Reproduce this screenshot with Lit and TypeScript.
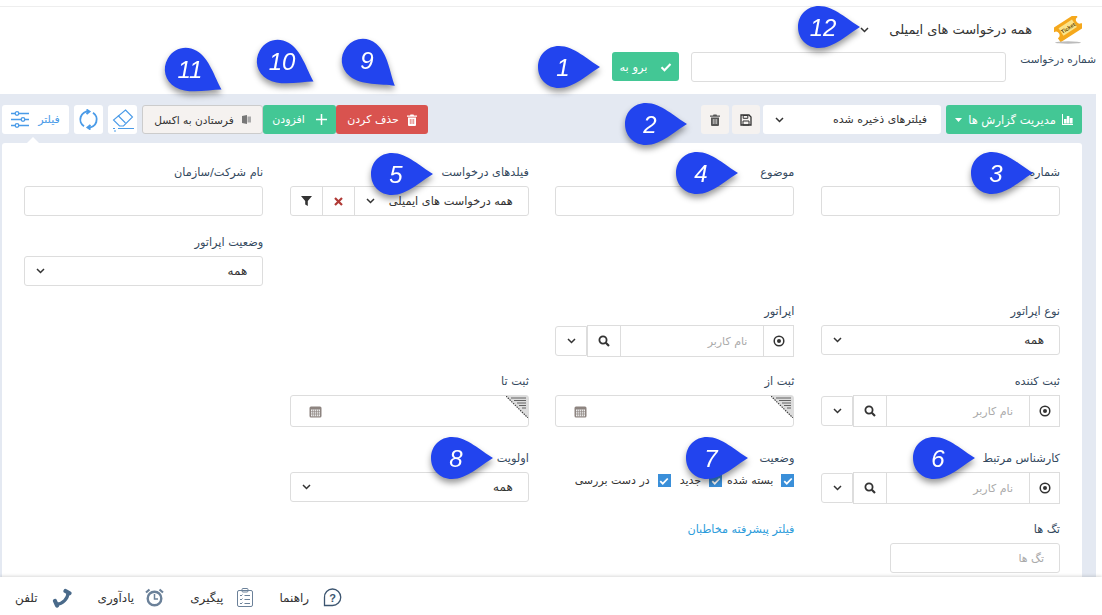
import { LitElement, html, css, svg } from "lit";
import { customElement } from "lit/decorators.js";

const chevron = html`<svg class="chev" width="9" height="6" viewBox="0 0 9 6"><path d="M1 1l3.5 3.5L8 1" fill="none" stroke="#333" stroke-width="1.5"/></svg>`;
const searchIcon = html`<svg width="12" height="12" viewBox="0 0 12 12"><circle cx="5" cy="5" r="3.6" fill="none" stroke="#333" stroke-width="1.8"/><path d="M7.8 7.8L11 11" stroke="#333" stroke-width="2.2"/></svg>`;
const dotIcon = html`<svg width="12" height="12" viewBox="0 0 12 12"><circle cx="6" cy="6" r="4.8" fill="none" stroke="#333" stroke-width="1.5"/><circle cx="6" cy="6" r="2" fill="#333"/></svg>`;
const calIcon = html`<svg width="13" height="13" viewBox="0 0 13 13"><rect x="0.5" y="1.5" width="12" height="11" rx="1.5" fill="#8d8480"/><rect x="2" y="4.5" width="9" height="6.8" fill="#eee"/><path d="M3.7 4.5v7M5.6 4.5v7M7.5 4.5v7M9.4 4.5v7M2 6.7h9M2 9h9" stroke="#8d8480" stroke-width=".7"/></svg>`;
const checkIcon = (c: string, s = 12) => html`<svg width="${s}" height="${s}" viewBox="0 0 12 12"><path d="M1.5 6.2l3 3L10.5 3" fill="none" stroke="${c}" stroke-width="2.1"/></svg>`;
const trashIcon = (c: string) => html`<svg width="10" height="12" viewBox="0 0 10 12"><path d="M3.5 .5h3l.5 1h3v1.3H0V1.500h3zM1 3.500h8V11a1 1 0 0 1-1 1H2a1 1 0 0 1-1-1z" fill="${c}"/><path d="M3.300 5v5M5 5v5M6.700 5v5" stroke="${c === "#fff" ? "#d9534f" : "#f5f2f0"}" stroke-width=".7"/></svg>`;

const markers = [
  { n: "1", x: 559, y: 67, a: 0 },
  { n: "2", x: 646, y: 124, a: 0 },
  { n: "3", x: 992, y: 173, a: 0 },
  { n: "4", x: 697, y: 173, a: 0 },
  { n: "5", x: 392, y: 174, a: 0 },
  { n: "6", x: 934, y: 458, a: 0 },
  { n: "7", x: 707, y: 458, a: 0 },
  { n: "8", x: 452, y: 458, a: 0 },
  { n: "9", x: 363, y: 60, a: 39 },
  { n: "10", x: 278, y: 61, a: 30 },
  { n: "11", x: 186, y: 69, a: 30 },
  { n: "12", x: 819, y: 27, a: 0 },
];

@customElement("app-root")
export class AppRoot extends LitElement {
  static styles = css`
    :host { display: flex; flex-direction: column; position: relative; width: 1102px; height: 615px; overflow: hidden; background: #fff; direction: rtl; font-family: "DejaVu Sans", "Noto Sans", sans-serif; font-size: 11px; color: #333; }
    * { box-sizing: border-box; }
    .topline { height: 7px; border-bottom: 1px solid #eee; flex: none; }
    .head { display: flex; align-items: center; height: 45px; padding-right: 20px; flex: none; }
    .ticket { width: 28px; height: 28px; margin-left: 22px; }
    .title { font-size: 13px; color: #333; margin-left: 20px; }
    .goto { display: flex; height: 30px; padding-right: 6px; flex: none; }
    .goto label { width: 75px; font-size: 10.500px; color: #34495e; white-space: nowrap; margin-left: 15px; padding-top: 1px; }
    .goto input { width: 315px; margin-left: 12px; }
    input { height: 30px; border: 1px solid #ddd; border-radius: 3px; background: #fff; font: inherit; direction: rtl; padding: 0 15px; outline: none; display: block; }
    input::placeholder { color: #aaa; }
    .btn { display: flex; align-items: center; justify-content: center; gap: 8px; height: 29px; border-radius: 3px; font-size: 11px; white-space: nowrap; }
    .green { background: #43c795; color: #fff; }
    .red { background: #d9534f; color: #fff; }
    .beige { background: #f5f2f0; border: 1px solid #ccc; color: #333; font-size: 10.600px; }
    .go { width: 67px; gap: 12px; font-size: 11.500px; }
    .band { flex: 1; min-height: 0; margin: 12px 6px 0 0; background: #e4e9f2; padding: 11px 14px 0 2px; display: flex; flex-direction: column; }
    .bar { display: flex; justify-content: space-between; height: 29px; flex: none; margin-bottom: 9px; }
    .side { display: flex; align-items: stretch; }
    .reports { width: 136px; font-size: 11.500px; gap: 6px; }
    .saved { width: 178px; margin-right: 5px; background: #fff; border-radius: 3px; display: flex; align-items: center; justify-content: space-between; padding: 0 14px 0 12px; font-size: 11px; }
    .sq { width: 28px; height: 29px; margin-right: 3px; background: #f5f2f0; border-radius: 3px; display: flex; align-items: center; justify-content: center; }
    .del { width: 92px; }
    .add { width: 73px; gap: 11px; }
    .excel { width: 121px; }
    .ic { width: 29px; margin-right: 5px; background: #fff; border-radius: 3px; display: flex; align-items: center; justify-content: center; }
    .filter { width: 67px; margin-right: 5px; background: #fff; border-radius: 3px; display: flex; align-items: center; justify-content: center; gap: 9px; color: #4a9be8; position: relative; font-size: 11px; }
    .filter::after { content: ""; position: absolute; left: 25px; top: 32px; border: 6px solid transparent; border-top: 0; border-bottom-color: #fff; }
    .card { flex: 1; min-height: 0; background: #fff; border-radius: 3px 3px 0 0; padding: 22px 22px 0 22px; overflow: hidden; }
    .grid { display: grid; grid-template-columns: repeat(4, 239px); column-gap: 26.600px; grid-template-rows: 70px 69px 70px 77px 71px; }
    .field label { display: block; height: 21px; font-size: 11.300px; line-height: 16px; color: #34495e; white-space: nowrap; }
    .field input { width: 100%; }
    .field input.tags { width: 170px; }
    .c1 { grid-column: 1; } .c2 { grid-column: 2; } .c3 { grid-column: 3; } .c4 { grid-column: 4; }
    .select { height: 30px; border: 1px solid #ddd; border-radius: 3px; display: flex; align-items: center; justify-content: space-between; padding: 0 15px 0 11px; font-size: 12px; }
    .group { display: flex; height: 32px; align-items: center; }
    .cell { height: 32px; border: 1px solid #ddd; border-width: 1.500px; display: flex; align-items: center; justify-content: center; background: #fff; flex: none; }
    .group input { flex: 1; width: 0; height: 32px; border-radius: 0; border: 1px solid #ddd; border-width: 1.500px 0; font-size: 11px; padding: 0 16px; }
    .group .cell:last-child { height: 30px; border-width: 1px; border-radius: 3px 0 0 3px; }
    .dot { width: 31px; }
    .find { width: 34px; }
    .more { width: 32px; }
    .sel { display: flex; height: 30px; border: 1px solid #ddd; border-radius: 3px; }
    .sel .main { flex: 1; display: flex; align-items: center; justify-content: space-between; padding: 0 15px 0 11px; font-size: 11.300px; white-space: nowrap; }
    .sel .x { width: 32px; border-right: 1px solid #ddd; display: flex; align-items: center; justify-content: center; }
    .date { position: relative; height: 32px; border: 1px solid #ddd; border-radius: 3px; display: flex; align-items: center; justify-content: flex-end; padding-left: 18px; }
    .corner { position: absolute; top: 0; right: 0; }
    .checks { display: flex; align-items: center; gap: 5px; font-size: 11px; white-space: nowrap; padding-top: 2px; }
    .opt { display: flex; align-items: center; gap: 8px; }
    .opt:last-child { margin-right: 4px; }
    .box { width: 13px; height: 13px; background: #3a8fd9; display: flex; align-items: center; justify-content: center; flex: none; }
    .link { color: #2d9cdb; font-size: 11.200px; white-space: nowrap; line-height: 16px; }
    .foot { flex: none; height: 38px; background: #fff; box-shadow: 0 -1px 3px rgba(0,0,0,.15); display: flex; justify-content: flex-end; align-items: center; gap: 26px; padding: 3px 0 0 15px; position: relative; font-size: 12px; color: #333; }
    .item { display: flex; align-items: center; gap: 14px; white-space: nowrap; }
    .item.tight { gap: 11px; }
    .pin { position: absolute; width: 62px; height: 42px; filter: drop-shadow(0 4px 3px rgba(0,0,0,.4)); }
    .pin svg { display: block; overflow: visible; }
    .pin span { position: absolute; left: 4px; top: 1px; width: 42px; height: 42px; display: flex; align-items: center; justify-content: center; direction: ltr; color: #fff; font: italic 24px "Liberation Sans", sans-serif; }
  `;

  userField(label: string, col: string) {
    return html`<div class="field ${col}"><label>${label}</label><div class="group">
      <div class="cell dot">${dotIcon}</div>
      <input placeholder="نام کاربر" />
      <div class="cell find">${searchIcon}</div>
      <div class="cell more">${chevron}</div>
    </div></div>`;
  }

  dateField(label: string, col: string) {
    return html`<div class="field ${col}"><label>${label}</label><div class="date">
      <svg class="corner" width="22" height="22" viewBox="0 0 22 22"><path d="M0 0h22v22z" fill="#ddd"/><path d="M0 0l22 22" stroke="#444" stroke-width="1.200" stroke-dasharray="1.500 1"/><path d="M5 2h15M8 4.500h12M11 7h9M13 9.500h7M16 12h4" stroke="#555" stroke-width=".9"/></svg>
      ${calIcon}
    </div></div>`;
  }

  selectField(label: string, col: string) {
    return html`<div class="field ${col}"><label>${label}</label><div class="select"><span>همه</span>${chevron}</div></div>`;
  }

  option(text: string) {
    return html`<div class="opt"><div class="box">${checkIcon("#fff", 10)}</div><span>${text}</span></div>`;
  }

  render() {
    return html`
      <div class="topline"></div>
      <div class="head">
        <svg class="ticket" viewBox="0 0 28 28">
          <g transform="rotate(-33 14 12)"><path d="M0 4h28v4a3.500 3.500 0 0 0 0 7v5H0v-5a3.500 3.500 0 0 0 0-7z" fill="#f5a81c"/><rect x="6" y="7" width="16" height="9" fill="#fbe38a"/><text x="14" y="14" text-anchor="middle" font-size="5.500" font-weight="700" font-family="Liberation Sans" fill="#6b4a00" direction="ltr">Ticket</text></g>
          <ellipse cx="14" cy="26.500" rx="13" ry="1.200" fill="#bbb"/>
        </svg>
        <span class="title">همه درخواست های ایمیلی</span>
        ${chevron}
      </div>
      <div class="goto">
        <label>شماره درخواست</label>
        <input />
        <div class="btn green go">${checkIcon("#fff")}<span>برو به</span></div>
      </div>
      <div class="band">
        <div class="bar">
          <div class="side">
            <div class="btn green reports">
              <svg width="11" height="11" viewBox="0 0 11 11"><path d="M0 0h1v10h10v1H0zM2 5h2.500v4.500H2zM4.800 2h2.500v7.500H4.800zM7.800 4h2.800v5.500H7.800z" fill="#fff"/></svg>
              <span>مدیریت گزارش ها</span>
              <svg width="7" height="4" viewBox="0 0 7 4"><path d="M0 0h7L3.500 4z" fill="#fff"/></svg>
            </div>
            <div class="saved"><span>فیلترهای ذخیره شده</span>${chevron}</div>
            <div class="sq"><svg width="12" height="12" viewBox="0 0 12 12"><path d="M1 1h8l2 2v8H1z" fill="none" stroke="#333" stroke-width="1.300"/><path d="M3.200 1.500h4.600v2.800H3.200zM3 7h6v4H3z" fill="none" stroke="#333" stroke-width="1"/></svg></div>
            <div class="sq">${trashIcon("#555")}</div>
          </div>
          <div class="side">
            <div class="btn red del">${trashIcon("#fff")}<span>حذف کردن</span></div>
            <div class="btn green add"><svg width="11" height="11" viewBox="0 0 11 11"><path d="M5.500 0v11M0 5.500h11" stroke="#fff" stroke-width="1.500"/></svg><span>افزودن</span></div>
            <div class="btn beige excel"><svg width="9" height="9" viewBox="0 0 9 9"><path d="M0 1l5-1v9L0 8z" fill="#777"/><path d="M5.500 1.500H9v6H5.500z" fill="#aaa"/></svg><span>فرستادن به اکسل</span></div>
            <div class="ic"><svg width="24" height="24" viewBox="0 0 24 24" fill="none" stroke="#4a9be8" stroke-width="1.100"><path d="M14.500 2l7 7-9 9H8.500l-6-6z"/><path d="M7 7.500l7.500 7.500M7 20.500h16M2 20.500h2M3 23h2"/></svg></div>
            <div class="ic"><svg width="21" height="21" viewBox="0 0 21 21" fill="none" stroke="#4a9be8" stroke-width="1.900"><path d="M11 2.500A8 8 0 0 0 6 17.200"/><path d="M10 18.500A8 8 0 0 0 15 3.800"/><path d="M8.500 .5L11.500 2.500 8.500 5M12.500 16L9.500 18.500 12.500 20.500"/></svg></div>
            <div class="filter"><span>فیلتر</span><svg width="18" height="17" viewBox="0 0 18 17" fill="none" stroke="#4a9be8" stroke-width="1.300"><path d="M0 2.500h18M0 8.500h18M0 14.500h18"/><circle cx="6" cy="2.500" r="1.800" fill="#fff"/><circle cx="12" cy="8.500" r="1.800" fill="#fff"/><circle cx="6" cy="14.500" r="1.800" fill="#fff"/></svg></div>
          </div>
        </div>
        <div class="card">
          <div class="grid">
            <div class="field c1"><label>شماره</label><input /></div>
            <div class="field c2"><label>موضوع</label><input /></div>
            <div class="field c3"><label>فیلدهای درخواست</label><div class="sel">
              <div class="main"><span>همه درخواست های ایمیلی</span>${chevron}</div>
              <div class="x"><svg width="9" height="9" viewBox="0 0 9 9"><path d="M1 1l7 7M8 1L1 8" stroke="#b03a36" stroke-width="2.200"/></svg></div>
              <div class="x"><svg width="11" height="10" viewBox="0 0 11 10"><path d="M0 0h11L6.800 5v5L4.200 8.500V5z" fill="#333"/></svg></div>
            </div></div>
            <div class="field c4"><label>نام شرکت/سازمان</label><input /></div>

            ${this.selectField("وضعیت اپراتور", "c4")}

            ${this.selectField("نوع اپراتور", "c1")}
            ${this.userField("اپراتور", "c2")}
            <div class="c3"></div>

            ${this.userField("ثبت کننده", "c1")}
            ${this.dateField("ثبت از", "c2")}
            ${this.dateField("ثبت تا", "c3")}

            ${this.userField("کارشناس مرتبط", "c1")}
            <div class="field c2"><label>وضعیت</label><div class="checks">
              ${this.option("بسته شده")}
              ${this.option("جدید")}
              ${this.option("در دست بررسی")}
            </div></div>
            ${this.selectField("اولویت", "c3")}

            <div class="field c1"><label>تگ ها</label><input class="tags" placeholder="تگ ها" /></div>
            <div class="c2 link">فیلتر پیشرفته مخاطبان</div>
          </div>
        </div>
      </div>
      <div class="foot">
        <div class="item"><svg width="19" height="19" viewBox="0 0 19 19"><path d="M9.500 1a8 8 0 1 1 0 16.500H1.500V9.500A8 8 0 0 1 9.500 1z" fill="none" stroke="#3c5570" stroke-width="1.300"/><text x="9.500" y="13.500" text-anchor="middle" font-size="11" font-weight="700" font-family="Liberation Sans" fill="#3c5570">?</text></svg><span>راهنما</span></div>
        <div class="item"><svg width="16" height="19" viewBox="0 0 16 19" fill="none" stroke="#6b8199" stroke-width="1"><rect x=".5" y="2.500" width="15" height="16" rx="1.500"/><rect x="5" y=".5" width="6" height="3.500" rx="1"/><path d="M3 7l1 1 1.500-1.500M3 11l1 1 1.500-1.500M3 15l1 1 1.500-1.500M7.500 7.500H13M7.500 11.500H13M7.500 15.500H13"/></svg><span>پیگیری</span></div>
        <div class="item tight"><svg width="19" height="19" viewBox="0 0 19 19" fill="none" stroke="#6b8199"><circle cx="9.500" cy="10.500" r="6.800" stroke-width="2.400"/><path d="M9.500 6v5h3.500" stroke-width="1.500"/><path d="M1 4.500L4.500 1.500M18 4.500L14.500 1.500" stroke-width="2.200"/></svg><span>یادآوری</span></div>
        <div class="item"><svg width="20" height="20" viewBox="0 0 20 20" fill="none" stroke="#4a6a8a" stroke-linecap="round"><path d="M16 5C16 10.500 10.500 16 5 16" stroke-width="3.200"/><path d="M13.500 3L17.500 5.300M3 13L5 17.500" stroke-width="4.200"/></svg><span>تلفن</span></div>
      </div>
      ${markers.map(
        (m) => html`<div class="pin" style="left:${m.x - 21}px;top:${m.y - 21}px">
          <svg width="62" height="42" viewBox="0 0 62 42" style="transform-origin:21px 21px;transform:rotate(${m.a}deg)">${svg`<path d="M0 21C0 9 9 0 21 0C36 0 50 14 62 21C50 28 36 42 21 42C9 42 0 33 0 21Z" fill="#2244ee"/>`}</svg>
          <span>${m.n}</span>
        </div>`
      )}
    `;
  }
}
